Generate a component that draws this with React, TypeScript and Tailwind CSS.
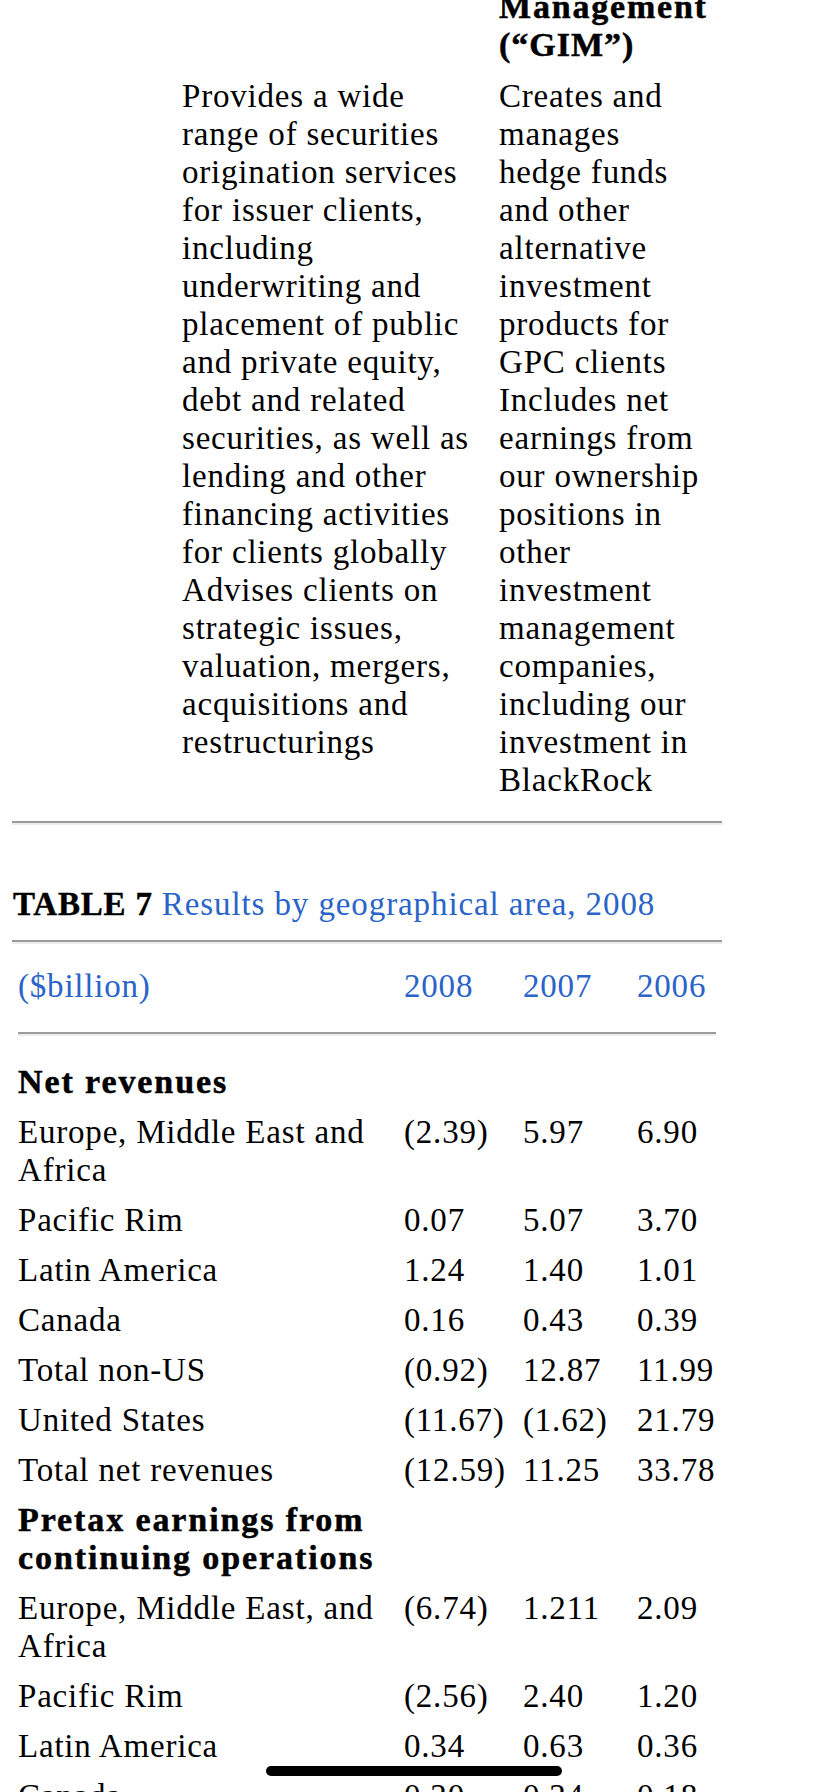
import React from "react";

const leftLines = [
  "Provides a wide",
  "range of securities",
  "origination services",
  "for issuer clients,",
  "including",
  "underwriting and",
  "placement of public",
  "and private equity,",
  "debt and related",
  "securities, as well as",
  "lending and other",
  "financing activities",
  "for clients globally",
  "Advises clients on",
  "strategic issues,",
  "valuation, mergers,",
  "acquisitions and",
  "restructurings",
];

const rightLines = [
  "Creates and",
  "manages",
  "hedge funds",
  "and other",
  "alternative",
  "investment",
  "products for",
  "GPC clients",
  "Includes net",
  "earnings from",
  "our ownership",
  "positions in",
  "other",
  "investment",
  "management",
  "companies,",
  "including our",
  "investment in",
  "BlackRock",
];

type Row = { label: string[]; bold?: boolean; v?: [string, string, string] };

const rows: Row[] = [
  { label: ["Net revenues"], bold: true },
  { label: ["Europe, Middle East and", "Africa"], v: ["(2.39)", "5.97", "6.90"] },
  { label: ["Pacific Rim"], v: ["0.07", "5.07", "3.70"] },
  { label: ["Latin America"], v: ["1.24", "1.40", "1.01"] },
  { label: ["Canada"], v: ["0.16", "0.43", "0.39"] },
  { label: ["Total non-US"], v: ["(0.92)", "12.87", "11.99"] },
  { label: ["United States"], v: ["(11.67)", "(1.62)", "21.79"] },
  { label: ["Total net revenues"], v: ["(12.59)", "11.25", "33.78"] },
  { label: ["Pretax earnings from", "continuing operations"], bold: true },
  { label: ["Europe, Middle East, and", "Africa"], v: ["(6.74)", "1.211", "2.09"] },
  { label: ["Pacific Rim"], v: ["(2.56)", "2.40", "1.20"] },
  { label: ["Latin America"], v: ["0.34", "0.63", "0.36"] },
  { label: ["Canada"], v: ["0.20", "0.24", "0.18"] },
];

function Rule({ className = "" }: { className?: string }) {
  return (
    <div className={className}>
      <div className="h-[2px] bg-[#9b9b9b]" />
      <div className="h-[2px] bg-[#ececec]" />
    </div>
  );
}

export default function App() {
  return (
    <div className="relative w-[828px] h-[1792px] overflow-hidden bg-white text-black font-['Liberation_Serif',serif] text-[33px] leading-[38px] tracking-[0.8px]">
      {/* Top table continuation */}
      <div className="mx-[13px] w-[713px] mt-[-12px] grid grid-cols-[169px_317px_1fr]">
        <div />
        <div />
        <div className="font-bold whitespace-nowrap text-[34px] [-webkit-text-stroke:0.5px_black]">
          <div className="tracking-[1.8px]">Management</div>
          <div className="tracking-[1px]">(“GIM”)</div>
        </div>
      </div>
      <div className="mx-[13px] w-[713px] mt-[13px] grid grid-cols-[169px_317px_1fr]">
        <div />
        <div>
          {leftLines.map((l, i) => (
            <div key={i} className="whitespace-nowrap">
              {l}
            </div>
          ))}
        </div>
        <div>
          {rightLines.map((l, i) => (
            <div key={i} className="whitespace-nowrap">
              {l}
            </div>
          ))}
        </div>
      </div>

      <Rule className="mx-[12px] w-[710px] mt-[22px]" />

      {/* Caption */}
      <div className="mx-[13px] mt-[60px] whitespace-nowrap">
        <span className="font-bold [-webkit-text-stroke:0.4px_black]">TABLE 7</span>{" "}
        <span className="text-[#2a64c8] tracking-[0.9px]">Results by geographical area, 2008</span>
      </div>

      <Rule className="mx-[12px] w-[710px] mt-[17px]" />

      {/* Data table */}
      <div className="mx-[18px] w-[698px]">
        <div className="mt-[23px] grid grid-cols-[386px_119px_114px_1fr] text-[#2a64c8] whitespace-nowrap">
          <div>($billion)</div>
          <div>2008</div>
          <div>2007</div>
          <div>2006</div>
        </div>
        <Rule className="mt-[27px]" />
        <div className="mt-[21px]">
          {rows.map((r, i) => (
            <div
              key={i}
              className="grid grid-cols-[386px_119px_114px_1fr] items-start py-[6px] whitespace-nowrap"
            >
              <div
                className={
                  r.bold
                    ? "font-bold text-[34px] tracking-[1.9px] [-webkit-text-stroke:0.5px_black]"
                    : ""
                }
              >
                {r.label.map((l, j) => (
                  <div key={j}>{l}</div>
                ))}
              </div>
              <div>{r.v ? r.v[0] : ""}</div>
              <div>{r.v ? r.v[1] : ""}</div>
              <div>{r.v ? r.v[2] : ""}</div>
            </div>
          ))}
        </div>
      </div>

      {/* Home indicator */}
      <div className="absolute left-[266px] top-[1766px] w-[296px] h-[10px] rounded-full bg-black" />
    </div>
  );
}
